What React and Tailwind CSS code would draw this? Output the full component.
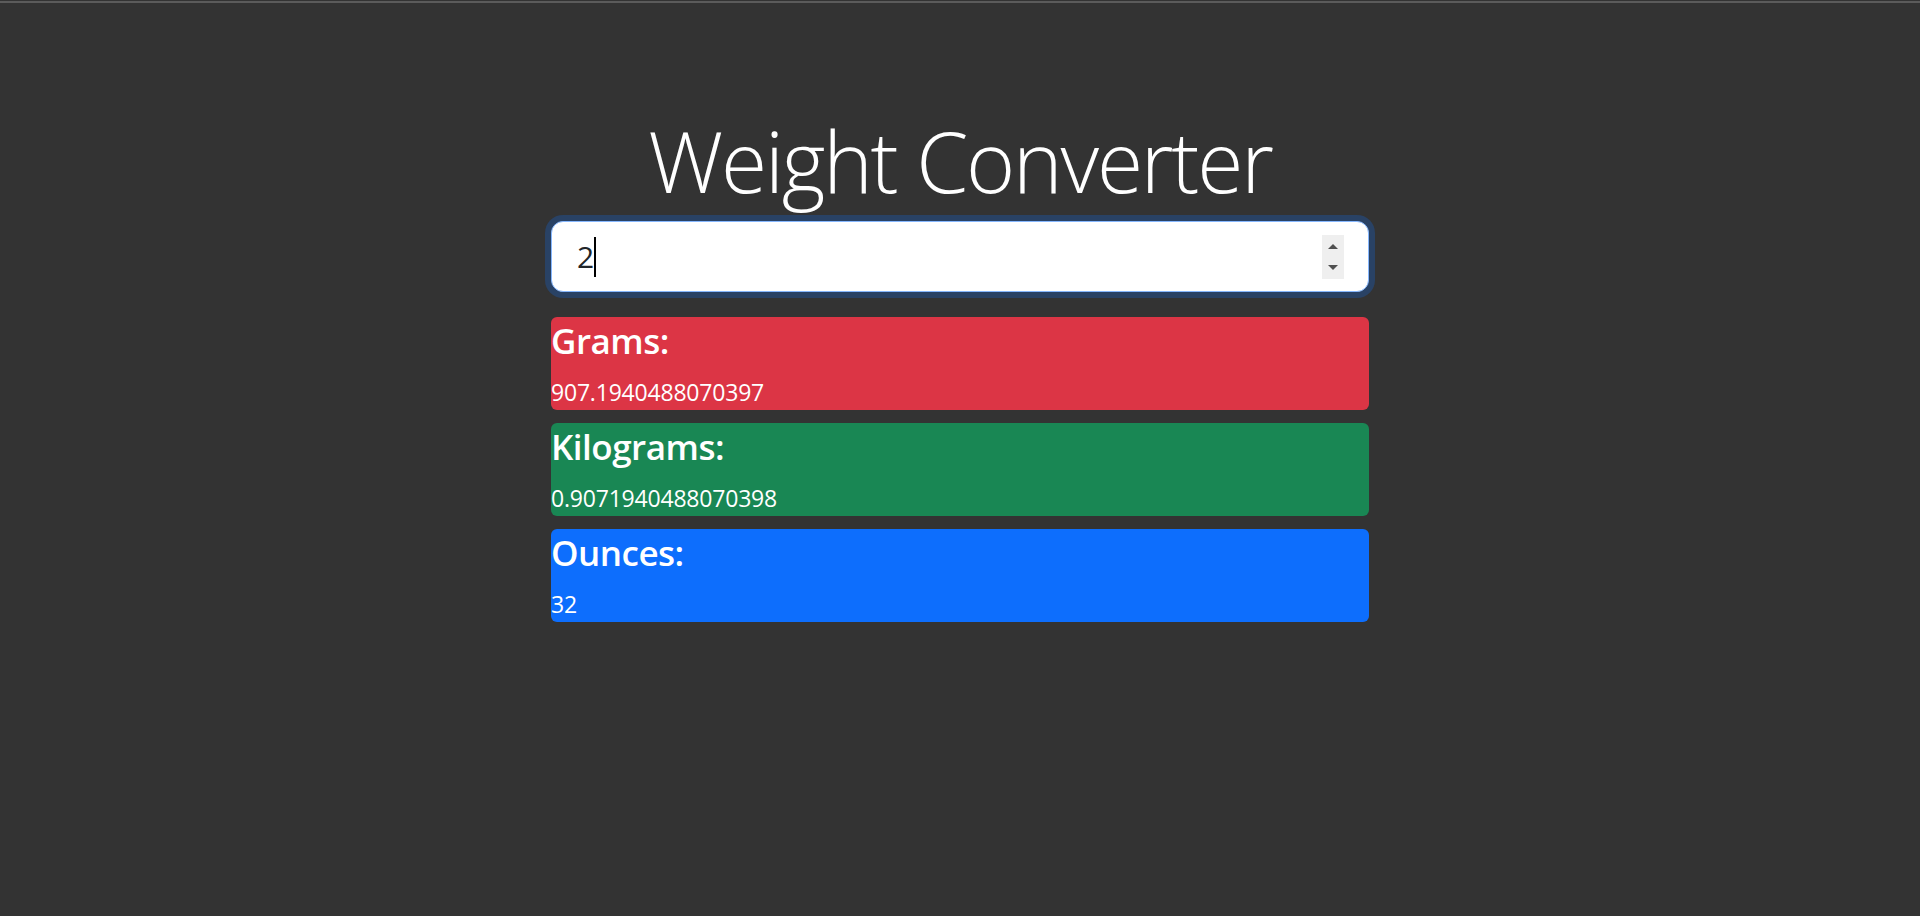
import React from "react";

const font = { fontFamily: '"Open Sans", "Noto Sans", sans-serif' };

function ResultBox({ label, value, bg }) {
  return (
    <div className={`h-[93px] rounded-[6px] ${bg} pt-[2px] text-white overflow-hidden`}>
      <h4 className="m-0 text-[35px] leading-[43px] font-semibold tracking-[-0.5px] mb-[12px]">{label}</h4>
      <p className="m-0 text-[23px] leading-[36px] tracking-[-0.2px]">{value}</p>
    </div>
  );
}

export default function App() {
  return (
    <div className="min-h-[916px] bg-[#333333] pt-[1px]" style={font}>
      <div className="h-[2px] bg-[#5b5b5b]" />
      <div className="w-[818px] mx-auto">
        <h1 className="mt-[107px] mb-[10px] text-center text-[84px] leading-[101px] font-light text-white tracking-[-2.2px]">
          Weight Converter
        </h1>
        <div className="h-[71px] rounded-[12px] bg-white border border-[#86b7fe] shadow-[0_0_0_6px_rgba(13,110,253,0.25)] flex items-center pl-[25px] pr-[24px]">
          <span className="text-[30px] leading-[45px] text-[#212529] tracking-[-1px]">2</span>
          <span className="w-[2px] h-[40px] bg-black ml-[1px]" />
          <div className="flex-1" />
          <div className="w-[22px] h-[44px] bg-[#efefef] flex flex-col items-center justify-center gap-[16px]">
            <svg width="10" height="5" viewBox="0 0 10 5"><path d="M0 5 L5 0 L10 5 Z" fill="#505050" /></svg>
            <svg width="10" height="5" viewBox="0 0 10 5"><path d="M0 0 L5 5 L10 0 Z" fill="#505050" /></svg>
          </div>
        </div>
        <div className="mt-[25px] flex flex-col gap-[13px]">
          <ResultBox label="Grams:" value="907.1940488070397" bg="bg-[#dc3545]" />
          <ResultBox label="Kilograms:" value="0.9071940488070398" bg="bg-[#198754]" />
          <ResultBox label="Ounces:" value="32" bg="bg-[#0d6efd]" />
        </div>
      </div>
    </div>
  );
}
